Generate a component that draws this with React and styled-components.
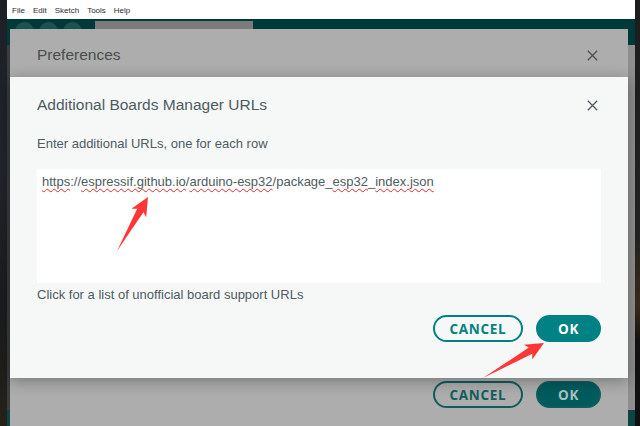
import React from 'react';
import styled, { createGlobalStyle } from 'styled-components';

const GlobalStyle = createGlobalStyle`
  html, body {
    margin: 0;
    padding: 0;
    width: 640px;
    height: 426px;
    overflow: hidden;
    background: #15171b;
  }
  * { box-sizing: border-box; }
`;

const Desktop = styled.div`
  position: relative;
  display: flex;
  width: 640px;
  height: 426px;
  font-family: 'Liberation Sans', Arial, sans-serif;
`;

const Wallpaper = styled.div`
  flex: 0 0 ${p => p.width}px;
  background: ${p =>
    p.side === 'left'
      ? 'linear-gradient(180deg, #1c1f26 0%, #22252c 40%, #1a1c20 70%, #262018 100%)'
      : 'linear-gradient(180deg, #1d1d1f 0%, #232322 55%, #3a2a1c 72%, #141312 80%, #101010 100%)'};
`;

const Window = styled.div`
  flex: 1;
  display: flex;
  flex-direction: column;
  background: #8f8f8f;
`;

const MenuBar = styled.div`
  flex: 0 0 19px;
  display: flex;
  align-items: center;
  gap: 8px;
  padding: 1px 0 0 5px;
  background: #ffffff;
  font-family: 'Liberation Sans', Arial, sans-serif;
  font-size: 8px;
  color: #2b2b33;
`;

const Workspace = styled.div`
  position: relative;
  flex: 1;
  display: flex;
  flex-direction: column;
`;

const Toolbar = styled.div`
  flex: 0 0 26px;
  display: flex;
  align-items: flex-start;
  gap: 5px;
  padding: 3px 0 0 8px;
  background: #00393a;
`;

const RoundTool = styled.div`
  width: 19px;
  height: 19px;
  border-radius: 50%;
  background: #1d5252;
`;

const SearchBox = styled.div`
  width: 158px;
  height: 20px;
  margin: -1px 0 0 8px;
  background: #7b7b7b;
`;

const Editor = styled.div`
  flex: 1;
  background: #8e8e8e;
  border-left: 3px solid #3a3d3d;
`;

const StatusBar = styled.div`
  flex: 0 0 16px;
  background: #0d4546;
`;

const PreferencesDialog = styled.div`
  position: absolute;
  top: 10px;
  left: 3px;
  right: 7px;
  bottom: 0;
  display: flex;
  flex-direction: column;
  background: #acadac;
`;

const DialogHeader = styled.div`
  display: flex;
  align-items: center;
  justify-content: space-between;
  padding: ${p => p.$top}px 30px 0 27px;
  height: ${p => p.$height}px;
`;

const DialogTitle = styled.div`
  font-size: 15.5px;
  line-height: 20px;
  height: 20px;
  color: ${p => (p.$dim ? '#4a4d4d' : '#4e5b61')};
`;

const Spacer = styled.div`
  flex: 1;
`;

const DialogFooter = styled.div`
  display: flex;
  justify-content: flex-end;
  gap: 13px;
  padding: 0 27px ${p => p.$bottom}px 0;
`;

const Button = styled.button`
  height: 27px;
  width: ${p => p.$width}px;
  border-radius: 14px;
  border: 2px solid ${p => (p.$dim ? '#0f5d5e' : '#008184')};
  background: ${p => (p.$primary ? (p.$dim ? '#005b5d' : '#008184') : 'transparent')};
  color: ${p =>
    p.$primary ? (p.$dim ? '#aac3c3' : '#ffffff') : p.$dim ? '#135e5f' : '#008184'};
  font-family: 'Open Sans', 'Liberation Sans', sans-serif;
  font-weight: 700;
  font-size: 13.5px;
  letter-spacing: 0.7px;
  padding: 0;
  display: flex;
  align-items: center;
  justify-content: center;
`;

const UrlsDialog = styled.div`
  position: absolute;
  top: 48px;
  left: 0;
  right: 0;
  height: 301px;
  display: flex;
  flex-direction: column;
  background: #f6f8f8;
  box-shadow: 0 3px 14px rgba(0, 0, 0, 0.32);
`;

const UrlsBody = styled.div`
  display: flex;
  flex-direction: column;
  padding: 0 27px;
  color: #4e5b61;
  font-size: 13px;
  line-height: 16px;
`;

const Hint = styled.div`
  margin-top: ${p => p.$gap}px;
  height: 16px;
`;

const UrlBox = styled.div`
  margin-top: 17px;
  height: 114px;
  padding: 5px 5px;
  background: #ffffff;
  color: #4e5b61;
`;

const Misspelt = styled.span`
  text-decoration: underline wavy #e8262b;
  text-decoration-thickness: 1px;
  text-underline-offset: 2px;
  text-decoration-skip-ink: none;
`;

const Annotations = styled.svg`
  position: absolute;
  inset: 0;
  pointer-events: none;
`;

const CloseIcon = ({ color }) => (
  <svg width="11" height="11" viewBox="0 0 11 11">
    <path d="M0.8 0.8 L10.2 10.2 M10.2 0.8 L0.8 10.2" stroke={color} strokeWidth="1.3" fill="none" />
  </svg>
);

// tapered callout arrow from the tail to the tip
const arrowPoints = (x1, y1, x2, y2) => {
  const len = Math.hypot(x2 - x1, y2 - y1);
  const ux = (x2 - x1) / len;
  const uy = (y2 - y1) / len;
  const nx = -uy;
  const ny = ux;
  const head = 17;
  const barb = 8.5;
  const neck = 3.6;
  const bx = x2 - ux * head;
  const by = y2 - uy * head;
  const pts = [
    [x1, y1],
    [bx + nx * neck + ux * 1.5, by + ny * neck + uy * 1.5],
    [bx + nx * barb - ux * 1.5, by + ny * barb - uy * 1.5],
    [x2, y2],
    [bx - nx * barb - ux * 1.5, by - ny * barb - uy * 1.5],
    [bx - nx * neck + ux * 1.5, by - ny * neck + uy * 1.5],
  ];
  return pts.map(p => p.map(v => v.toFixed(1)).join(',')).join(' ');
};

const menus = ['File', 'Edit', 'Sketch', 'Tools', 'Help'];

export default function App() {
  return (
    <>
      <GlobalStyle />
      <Desktop>
        <Wallpaper side="left" width={7} />
        <Window>
          <MenuBar>
            {menus.map(m => (
              <span key={m}>{m}</span>
            ))}
          </MenuBar>
          <Workspace>
            <Toolbar>
              <RoundTool />
              <RoundTool />
              <RoundTool />
              <SearchBox />
            </Toolbar>
            <Editor />
            <StatusBar />

            <PreferencesDialog>
              <DialogHeader $top={4} $height={48}>
                <DialogTitle $dim>Preferences</DialogTitle>
                <CloseIcon color="#4d5050" />
              </DialogHeader>
              <Spacer />
              <DialogFooter $bottom={18}>
                <Button $dim $width={90}>CANCEL</Button>
                <Button $dim $primary $width={65}>OK</Button>
              </DialogFooter>

              <UrlsDialog>
                <DialogHeader $top={18} $height={38}>
                  <DialogTitle>Additional Boards Manager URLs</DialogTitle>
                  <CloseIcon color="#4e5b61" />
                </DialogHeader>
                <UrlsBody>
                  <Hint $gap={21}>Enter additional URLs, one for each row</Hint>
                  <UrlBox>
                    <Misspelt>https</Misspelt>://<Misspelt>espressif.github.io</Misspelt>/
                    <Misspelt>arduino-esp32</Misspelt>/package_<Misspelt>esp32</Misspelt>_
                    <Misspelt>index.json</Misspelt>
                  </UrlBox>
                  <Hint $gap={4}>Click for a list of unofficial board support URLs</Hint>
                </UrlsBody>
                <Spacer />
                <DialogFooter $bottom={36}>
                  <Button $width={90}>CANCEL</Button>
                  <Button $primary $width={65}>OK</Button>
                </DialogFooter>
              </UrlsDialog>
            </PreferencesDialog>
          </Workspace>
        </Window>
        <Wallpaper side="right" width={5} />

        <Annotations width="640" height="426" viewBox="0 0 640 426">
          <polygon points={arrowPoints(117, 251, 148, 197)} fill="#ff3636" />
          <polygon points={arrowPoints(483, 378, 544, 343)} fill="#ff3636" />
        </Annotations>
      </Desktop>
    </>
  );
}
